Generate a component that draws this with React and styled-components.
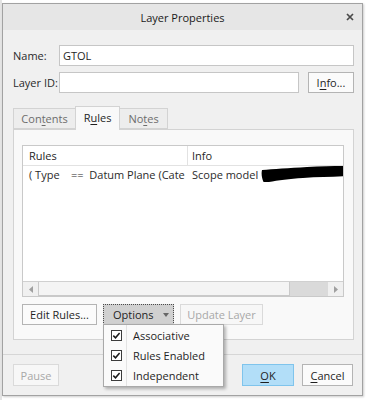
import styled, { createGlobalStyle } from 'styled-components';

const GlobalStyle = createGlobalStyle`
  * { box-sizing: border-box; }
  body {
    margin: 0;
    background: #ffffff;
    font-family: "Open Sans", "Noto Sans", sans-serif;
    font-size: 11px;
    color: #1f1f1f;
  }
`;

const Page = styled.div`
  width: 367px;
  height: 400px;
  padding: 3px 0 0 2px;
  background: linear-gradient(to right, #e4e4e4 2px, #ffffff 2px);
`;

const Dialog = styled.div`
  width: 361px;
  border: 1px solid #a2a2a2;
  background: #f0f0f0;
  display: flex;
  flex-direction: column;
  box-shadow: 1px 1px 2px rgba(0, 0, 0, 0.2);
`;

const TitleBar = styled.div`
  height: 26px;
  background: #e6e6e6;
  display: grid;
  grid-template-columns: 1fr auto 1fr;
  align-items: center;
`;

const Title = styled.div`
  grid-column: 2;
  font-size: 11px;
  color: #1a1a1a;
`;

const Close = styled.div`
  grid-column: 3;
  justify-self: end;
  padding-right: 8px;
  display: flex;
  align-items: center;
`;

const Body = styled.div`
  padding: 15px 8px 0 10px;
  display: flex;
  flex-direction: column;
`;

const FieldRow = styled.div`
  display: flex;
  align-items: center;
  height: 21px;
  gap: 9px;
  margin-top: ${(p) => p.$gap || 0}px;
`;

const Label = styled.div`
  width: 46px;
  margin-right: -9px;
  color: #2a2a2a;
`;

const TextBox = styled.div`
  flex: 1;
  height: 21px;
  background: #ffffff;
  border: 1px solid #c6c6c6;
  padding: 0 3px;
  line-height: 19px;
  color: #1f1f1f;
`;

const Button = styled.div`
  width: ${(p) => p.$w}px;
  height: ${(p) => p.$h || 21}px;
  flex-shrink: 0;
  display: flex;
  align-items: center;
  justify-content: center;
  border: 1px solid ${(p) => (p.$primary ? '#7fc4ec' : p.$disabled ? '#dadada' : '#b4b4b4')};
  background: ${(p) => (p.$primary ? '#b2def8' : p.$disabled ? '#f7f7f7' : '#fbfbfb')};
  color: ${(p) => (p.$disabled ? '#a8a8a8' : '#1f1f1f')};
`;

const Key = styled.span`
  text-decoration: underline;
  text-underline-offset: 2px;
`;

const Tabs = styled.div`
  margin-top: 13px;
  display: flex;
  flex-direction: column;
`;

const TabStrip = styled.div`
  height: 23px;
  display: flex;
  align-items: flex-end;
`;

const Tab = styled.div`
  position: relative;
  width: ${(p) => p.$w}px;
  height: ${(p) => (p.$active ? 24 : 21)}px;
  margin-bottom: ${(p) => (p.$active ? -1 : 0)}px;
  margin-left: ${(p) => (p.$first ? 0 : -1)}px;
  z-index: ${(p) => (p.$active ? 1 : 0)};
  border: 1px solid #d3d3d3;
  border-bottom: ${(p) => (p.$active ? 'none' : '1px solid #d3d3d3')};
  background: ${(p) => (p.$active ? '#f9f9f9' : '#ededed')};
  color: ${(p) => (p.$active ? '#1f1f1f' : '#6c6c6c')};
  display: flex;
  align-items: center;
  justify-content: center;
  padding-bottom: ${(p) => (p.$active ? 2 : 0)}px;
`;

const TabPanel = styled.div`
  height: 211px;
  border: 1px solid #d3d3d3;
  background: #f9f9f9;
  padding: 15px 9px 0 8px;
  display: flex;
  flex-direction: column;
`;

const ListBox = styled.div`
  height: 152px;
  border: 1px solid #c9c9c9;
  background: #ffffff;
  display: flex;
  flex-direction: column;
`;

const ListHeader = styled.div`
  height: 20px;
  display: flex;
  border-bottom: 1px solid #e2e2e2;
`;

const HeaderCell = styled.div`
  width: ${(p) => (p.$w ? `${p.$w}px` : 'auto')};
  flex: ${(p) => (p.$w ? 'none' : 1)};
  padding-left: ${(p) => (p.$w ? 6 : 4)}px;
  border-left: ${(p) => (p.$w ? 'none' : '1px solid #e2e2e2')};
  display: flex;
  align-items: center;
  color: #1f1f1f;
`;

const ListRow = styled.div`
  height: 16px;
  display: flex;
`;

const Cell = styled.div`
  width: ${(p) => (p.$w ? `${p.$w}px` : 'auto')};
  flex: ${(p) => (p.$w ? 'none' : 1)};
  padding-left: ${(p) => (p.$w ? 6 : 5)}px;
  overflow: hidden;
  white-space: pre;
  display: flex;
  align-items: center;
  color: #2b2b2b;
`;

const Fill = styled.div`
  flex: 1;
`;

const HScroll = styled.div`
  height: 15px;
  display: flex;
  border-top: 1px solid #d0d0d0;
  background: #f0f0f0;
`;

const ScrollArrow = styled.div`
  width: 15px;
  display: flex;
  align-items: center;
  justify-content: center;
`;

const Thumb = styled.div`
  width: 252px;
  background: #f4f4f4;
  border: 1px solid #c9c9c9;
  border-top: none;
`;

const Track = styled.div`
  flex: 1;
  background: #dadada;
`;

const ButtonRow = styled.div`
  margin-top: 7px;
  display: flex;
  gap: 6px;
`;

const MenuAnchor = styled.div`
  position: relative;
`;

const OptionsButton = styled.div`
  width: 71px;
  height: 21px;
  display: flex;
  align-items: center;
  padding: 0 4px 0 9px;
  background: #d0d0d0;
  border: 1px dotted #4a4a4a;
  color: #1f1f1f;
`;

const Caret = styled.div`
  margin-left: auto;
  width: 0;
  height: 0;
  border-left: 3px solid transparent;
  border-right: 3px solid transparent;
  border-top: 4px solid #666666;
`;

const Menu = styled.div`
  position: absolute;
  top: 100%;
  left: 0;
  margin-top: -1px;
  width: 121px;
  padding: 0 0 1px;
  background: #fafafa;
  border: 1px solid #a9a9a9;
  box-shadow: 2px 2px 3px rgba(0, 0, 0, 0.28);
  z-index: 5;
  background-image: linear-gradient(to right, transparent 22px, #e3e3e3 22px, #e3e3e3 23px, transparent 23px);
`;

const MenuItem = styled.div`
  height: 20px;
  display: flex;
  align-items: center;
`;

const CheckCell = styled.div`
  width: 23px;
  display: flex;
  align-items: center;
  padding-left: 7px;
`;

const MenuText = styled.div`
  padding-left: 6px;
  color: #1f1f1f;
`;

const Separator = styled.div`
  margin-top: 14px;
  height: 1px;
  background: #d6d6d6;
`;

const Footer = styled.div`
  padding: 9px 9px 9px 10px;
  display: flex;
  gap: 8px;
`;

const Check = () => (
  <svg width="11" height="11" viewBox="0 0 11 11">
    <rect x="0.5" y="0.5" width="10" height="10" fill="#ffffff" stroke="#3c3c3c" />
    <path d="M2.3 5.6 L4.5 7.8 L8.6 2.9" fill="none" stroke="#1a1a1a" strokeWidth="1.5" />
  </svg>
);

const Scribble = () => (
  <svg width="88" height="18" viewBox="0 0 88 18" style={{ flexShrink: 0, marginLeft: 3 }}>
    <path
      d="M1 5 C12 4 28 3 46 2 C62 1 76 1 88 1 L88 11 C74 12 58 12 42 13 C26 14 12 16 3 18 C1 14 0 9 1 5 Z"
      fill="#000000"
    />
  </svg>
);

const items = ['Associative', 'Rules Enabled', 'Independent'];

export default function App() {
  return (
    <Page>
      <GlobalStyle />
      <Dialog>
        <TitleBar>
          <Title>Layer Properties</Title>
          <Close>
            <svg width="8" height="8" viewBox="0 0 8 8">
              <path d="M1 1 L7 7 M7 1 L1 7" stroke="#4a4a4a" strokeWidth="1.7" />
            </svg>
          </Close>
        </TitleBar>

        <Body>
          <FieldRow>
            <Label>Name:</Label>
            <TextBox>GTOL</TextBox>
          </FieldRow>
          <FieldRow $gap={6}>
            <Label>Layer ID:</Label>
            <TextBox />
            <Button $w={46}>
              I<Key>n</Key>fo...
            </Button>
          </FieldRow>

          <Tabs>
            <TabStrip>
              <Tab $first $w={63}>
                Con<Key>t</Key>ents
              </Tab>
              <Tab $active $w={45}>
                R<Key>u</Key>les
              </Tab>
              <Tab $w={49}>
                No<Key>t</Key>es
              </Tab>
            </TabStrip>
            <TabPanel>
              <ListBox>
                <ListHeader>
                  <HeaderCell $w={164}>Rules</HeaderCell>
                  <HeaderCell>Info</HeaderCell>
                </ListHeader>
                <ListRow>
                  <Cell $w={164}>( Type    ==  Datum Plane (Cate</Cell>
                  <Cell>
                    Scope model
                    <Scribble />
                  </Cell>
                </ListRow>
                <Fill />
                <HScroll>
                  <ScrollArrow>
                    <svg width="4" height="7" viewBox="0 0 4 7">
                      <path d="M4 0 L0 3.5 L4 7 Z" fill="#a0a0a0" />
                    </svg>
                  </ScrollArrow>
                  <Thumb />
                  <Track />
                  <ScrollArrow>
                    <svg width="4" height="7" viewBox="0 0 4 7">
                      <path d="M0 0 L4 3.5 L0 7 Z" fill="#a0a0a0" />
                    </svg>
                  </ScrollArrow>
                </HScroll>
              </ListBox>

              <ButtonRow>
                <Button $w={75}>Edit Rules...</Button>
                <MenuAnchor>
                  <OptionsButton>
                    Options
                    <Caret />
                  </OptionsButton>
                  <Menu>
                    {items.map((label) => (
                      <MenuItem key={label}>
                        <CheckCell>
                          <Check />
                        </CheckCell>
                        <MenuText>{label}</MenuText>
                      </MenuItem>
                    ))}
                  </Menu>
                </MenuAnchor>
                <Button $w={83} $disabled>
                  Update Layer
                </Button>
              </ButtonRow>
            </TabPanel>
          </Tabs>
        </Body>

        <Separator />

        <Footer>
          <Button $w={46} $h={22} $disabled>
            Pause
          </Button>
          <Fill />
          <Button $w={52} $h={22} $primary>
            <Key>O</Key>K
          </Button>
          <Button $w={51} $h={22}>
            <Key>C</Key>ancel
          </Button>
        </Footer>
      </Dialog>
    </Page>
  );
}
